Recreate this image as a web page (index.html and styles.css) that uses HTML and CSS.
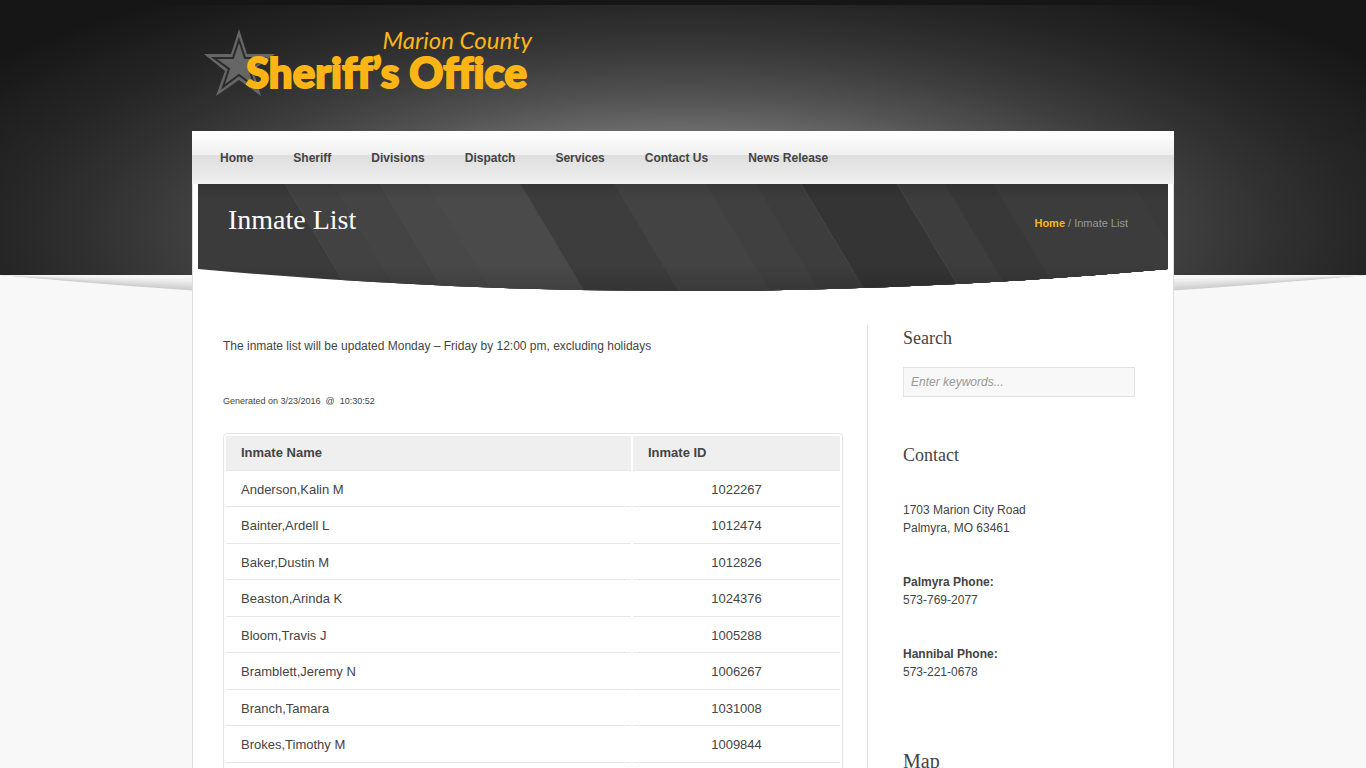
FILE: index.html
```html
<!DOCTYPE html>
<html lang="en">
<head>
<meta charset="utf-8">
<title>Inmate List - Marion County Sheriff's Office</title>
<link rel="stylesheet" href="styles.css">
</head>
<body>
<div class="backdrop" aria-hidden="true">
  <div class="backdrop-dark"></div>
  <svg class="backdrop-curve" viewBox="0 0 1366 32" preserveAspectRatio="none">
    <path d="M0 0Q683 64 1366 0Z" fill="#cecece"/>
    <path d="M0 0Q683 58 1366 0Z" fill="#d4d4d4"/>
    <path d="M0 0Q683 51 1366 0Z" fill="#dadada"/>
    <path d="M0 0Q683 44 1366 0Z" fill="#e1e1e1"/>
    <path d="M0 0Q683 36 1366 0Z" fill="#e8e8e8"/>
    <path d="M0 0Q683 27 1366 0Z" fill="#efefef"/>
    <path d="M0 0Q683 16 1366 0Z" fill="#f6f6f6"/>
  </svg>
</div>
<div class="page">
  <header class="header">
    <a class="logo" href="#" aria-label="Marion County Sheriff's Office">
      <svg width="340" height="80" viewBox="0 0 340 80">
        <path fill="#666" d="M35 5L43 30L71 30L49 46L57 72L35 56L12 72L21 47L0 30L27 30Z"/>
        <path fill="none" stroke="#2b2b2b" stroke-width="2" d="M35 16L41 34L60 34L45 45L51 63L35 51L19 63L25 45L10 34L29 34Z"/>
        <text class="logo-place" x="328" y="25" text-anchor="end">Marion County</text>
        <text class="logo-name" x="42" y="64">Sheriff’s Office</text>
      </svg>
    </a>
  </header>
  <div class="sheet">
    <nav class="nav">
      <a href="#">Home</a>
      <a href="#">Sheriff</a>
      <a href="#">Divisions</a>
      <a href="#">Dispatch</a>
      <a href="#">Services</a>
      <a href="#">Contact Us</a>
      <a href="#">News Release</a>
    </nav>
    <div class="paper">
      <div class="banner">
        <svg class="banner-art" viewBox="198 0 970 107" preserveAspectRatio="none" aria-hidden="true">
          <defs>
            <clipPath id="curve"><path d="M198 0H1168V85Q683 129 198 85Z"/></clipPath>
            <linearGradient id="shade" x1="0" y1="0" x2="0" y2="1">
              <stop offset="0" stop-color="#000" stop-opacity=".12"/>
              <stop offset=".15" stop-color="#000" stop-opacity="0"/>
              <stop offset=".75" stop-color="#000" stop-opacity="0"/>
              <stop offset="1" stop-color="#000" stop-opacity=".14"/>
            </linearGradient>
          </defs>
          <g clip-path="url(#curve)">
            <path fill="#3b3b3b" d="M198 0H1168V107H198Z"/>
            <path fill="#424242" d="M285 0H1168V107H349Z"/>
            <path fill="#444" d="M332 0H1168V107H396Z"/>
            <path fill="#484848" d="M380 0H1168V107H444Z"/>
            <path fill="#4a4a4a" d="M427 0H1168V107H491Z"/>
            <path fill="#3d3d3d" d="M520 0H1168V107H584Z"/>
            <path fill="#434343" d="M614 0H1168V107H678Z"/>
            <path fill="#404040" d="M706 0H1168V107H770Z"/>
            <path fill="#3d3d3d" d="M756 0H1168V107H820Z"/>
            <path fill="#343434" d="M801 0H1168V107H865Z"/>
            <path fill="#3d3d3d" d="M897 0H1168V107H961Z"/>
            <path fill="#383838" d="M945 0H1168V107H1009Z"/>
            <path fill="#3c3c3c" d="M993 0H1168V107H1057Z"/>
            <path fill="#3a3a3a" d="M1133 0H1168V58Z"/>
            <path fill="none" stroke="#505050" d="M285 0L349 107M380 0L444 107M520 0L584 107M801 0L865 107M897 0L961 107" opacity=".6"/>
            <path fill="url(#shade)" d="M198 0H1168V107H198Z"/>
          </g>
        </svg>
        <h1 class="title">Inmate List</h1>
        <p class="crumbs"><a href="#">Home</a> / Inmate List</p>
      </div>
      <div class="columns">
        <main class="main">
          <p class="intro">The inmate list will be updated Monday – Friday by 12:00 pm, excluding holidays</p>
          <p class="generated">Generated on 3/23/2016&nbsp; @&nbsp; 10:30:52</p>
          <div class="table-frame">
            <table class="inmates">
              <thead><tr><th scope="col">Inmate Name</th><th scope="col" class="id">Inmate ID</th></tr></thead>
              <tbody>
                <tr><td>Anderson,Kalin M</td><td>1022267</td></tr>
                <tr><td>Bainter,Ardell L</td><td>1012474</td></tr>
                <tr><td>Baker,Dustin M</td><td>1012826</td></tr>
                <tr><td>Beaston,Arinda K</td><td>1024376</td></tr>
                <tr><td>Bloom,Travis J</td><td>1005288</td></tr>
                <tr><td>Bramblett,Jeremy N</td><td>1006267</td></tr>
                <tr><td>Branch,Tamara</td><td>1031008</td></tr>
                <tr><td>Brokes,Timothy M</td><td>1009844</td></tr>
              </tbody>
            </table>
          </div>
        </main>
        <aside class="side">
          <section>
            <h2><label for="keywords">Search</label></h2>
            <input class="search" id="keywords" type="text" placeholder="Enter keywords...">
          </section>
          <section class="contact">
            <h2>Contact</h2>
            <p>1703 Marion City Road<br>Palmyra, MO 63461</p>
            <p><strong>Palmyra Phone:</strong><br>573-769-2077</p>
            <p><strong>Hannibal Phone:</strong><br>573-221-0678</p>
          </section>
          <section class="map">
            <h2>Map</h2>
          </section>
        </aside>
      </div>
    </div>
  </div>
</div>
</body>
</html>
```

FILE: styles.css
```css
* { box-sizing: border-box; }

body {
  margin: 0;
  background: #f8f8f8;
  color: #444;
  font: 12px/18px "Liberation Sans", Arial, sans-serif;
}

h1, h2, p { margin: 0; font-weight: normal; }
a { color: inherit; text-decoration: none; }

/* Full-width dark header art behind the page */
.backdrop {
  position: absolute;
  inset: 0 0 auto;
  z-index: -1;
}

.backdrop-dark {
  height: 275px;
  border-top: 5px solid #161616;
  background: radial-gradient(ellipse 52% 240px at 50% 225px, #808080 0%, #6a6a6a 42%, #525252 56%, #3e3e3e 71%, #323232 82%, #262626 96%, #161616 120%);
}

.backdrop-curve { display: block; width: 100%; height: 32px; }

.page {
  max-width: 982px;
  margin: 0 auto;
}

.header {
  height: 131px;
  padding: 24px 12px;
}

.logo { display: inline-block; }
.logo svg { display: block; }

.logo-place {
  fill: #fdb515;
  font: italic 24px Lato, sans-serif;
}

.logo-name {
  fill: #fdb515;
  stroke: #fdb515;
  stroke-width: 2px;
  font: 900 42px Lato, sans-serif;
  font-variant-ligatures: none;
}

.nav {
  display: flex;
  flex-wrap: wrap;
  align-items: center;
  gap: 0 40px;
  min-height: 53px;
  padding: 0 28px;
  background: linear-gradient(#fff, #f0f0f0 45%, #dedede 46%, #f0f0f0);
  font-weight: bold;
}

.paper {
  padding: 0 5px;
  border: 1px solid #ddd;
  border-width: 0 1px;
  background: #fff;
}

.banner {
  display: grid;
  grid-template-columns: 1fr auto;
  align-items: start;
  height: 107px;
}

.banner > * { grid-row: 1; }

.banner-art {
  grid-column: 1 / -1;
  width: 100%;
  height: 107px;
}

.title {
  grid-column: 1;
  padding: 20px 30px;
  color: #fff;
  font: 28px/32px "Liberation Serif", "Times New Roman", serif;
  z-index: 1;
}

.crumbs {
  grid-column: 2;
  padding: 30px 40px;
  color: #999;
  font-size: 11px;
  z-index: 1;
}

.crumbs a { color: #fdb515; font-weight: bold; }

.columns {
  display: grid;
  grid-template-columns: minmax(0, 1fr) 301px;
  gap: 24px;
  padding: 34px 0 40px 25px;
}

.intro { padding-top: 12px; }

.generated {
  margin: 37px 0 23px;
  font-size: 9px;
}

.table-frame {
  padding-bottom: 40px;
  border: 1px solid #e5e5e5;
  border-radius: 4px;
}

.inmates {
  width: 100%;
  border-spacing: 2px;
  font-size: 13px;
  line-height: 1.5;
}

.inmates th,
.inmates td {
  padding: 7px 15px;
  border-bottom: 1px solid #e7e7e7;
  text-align: center;
}

.inmates th { background: #efefef; text-align: left; }
.inmates td:first-child { text-align: left; }
.inmates .id { width: 207px; }

.side {
  padding: 0 33px 0 35px;
  border-left: 1px solid #e5e5e5;
}

.side h2 {
  font: 18px/26px "Liberation Serif", "Times New Roman", serif;
}

.search {
  width: 100%;
  height: 30px;
  margin-top: 16px;
  padding: 0 7px;
  border: 1px solid #e2e2e2;
  background: #f8f8f8;
  color: #444;
  font: italic 12px "Liberation Sans", Arial, sans-serif;
}

.search::placeholder { color: #999; }

.contact { padding-top: 45px; }
.contact p { padding-bottom: 36px; }
.contact h2 { margin-bottom: 33px; }
.map { padding-top: 31px; }
.map h2 { font-size: 20px; }
```
